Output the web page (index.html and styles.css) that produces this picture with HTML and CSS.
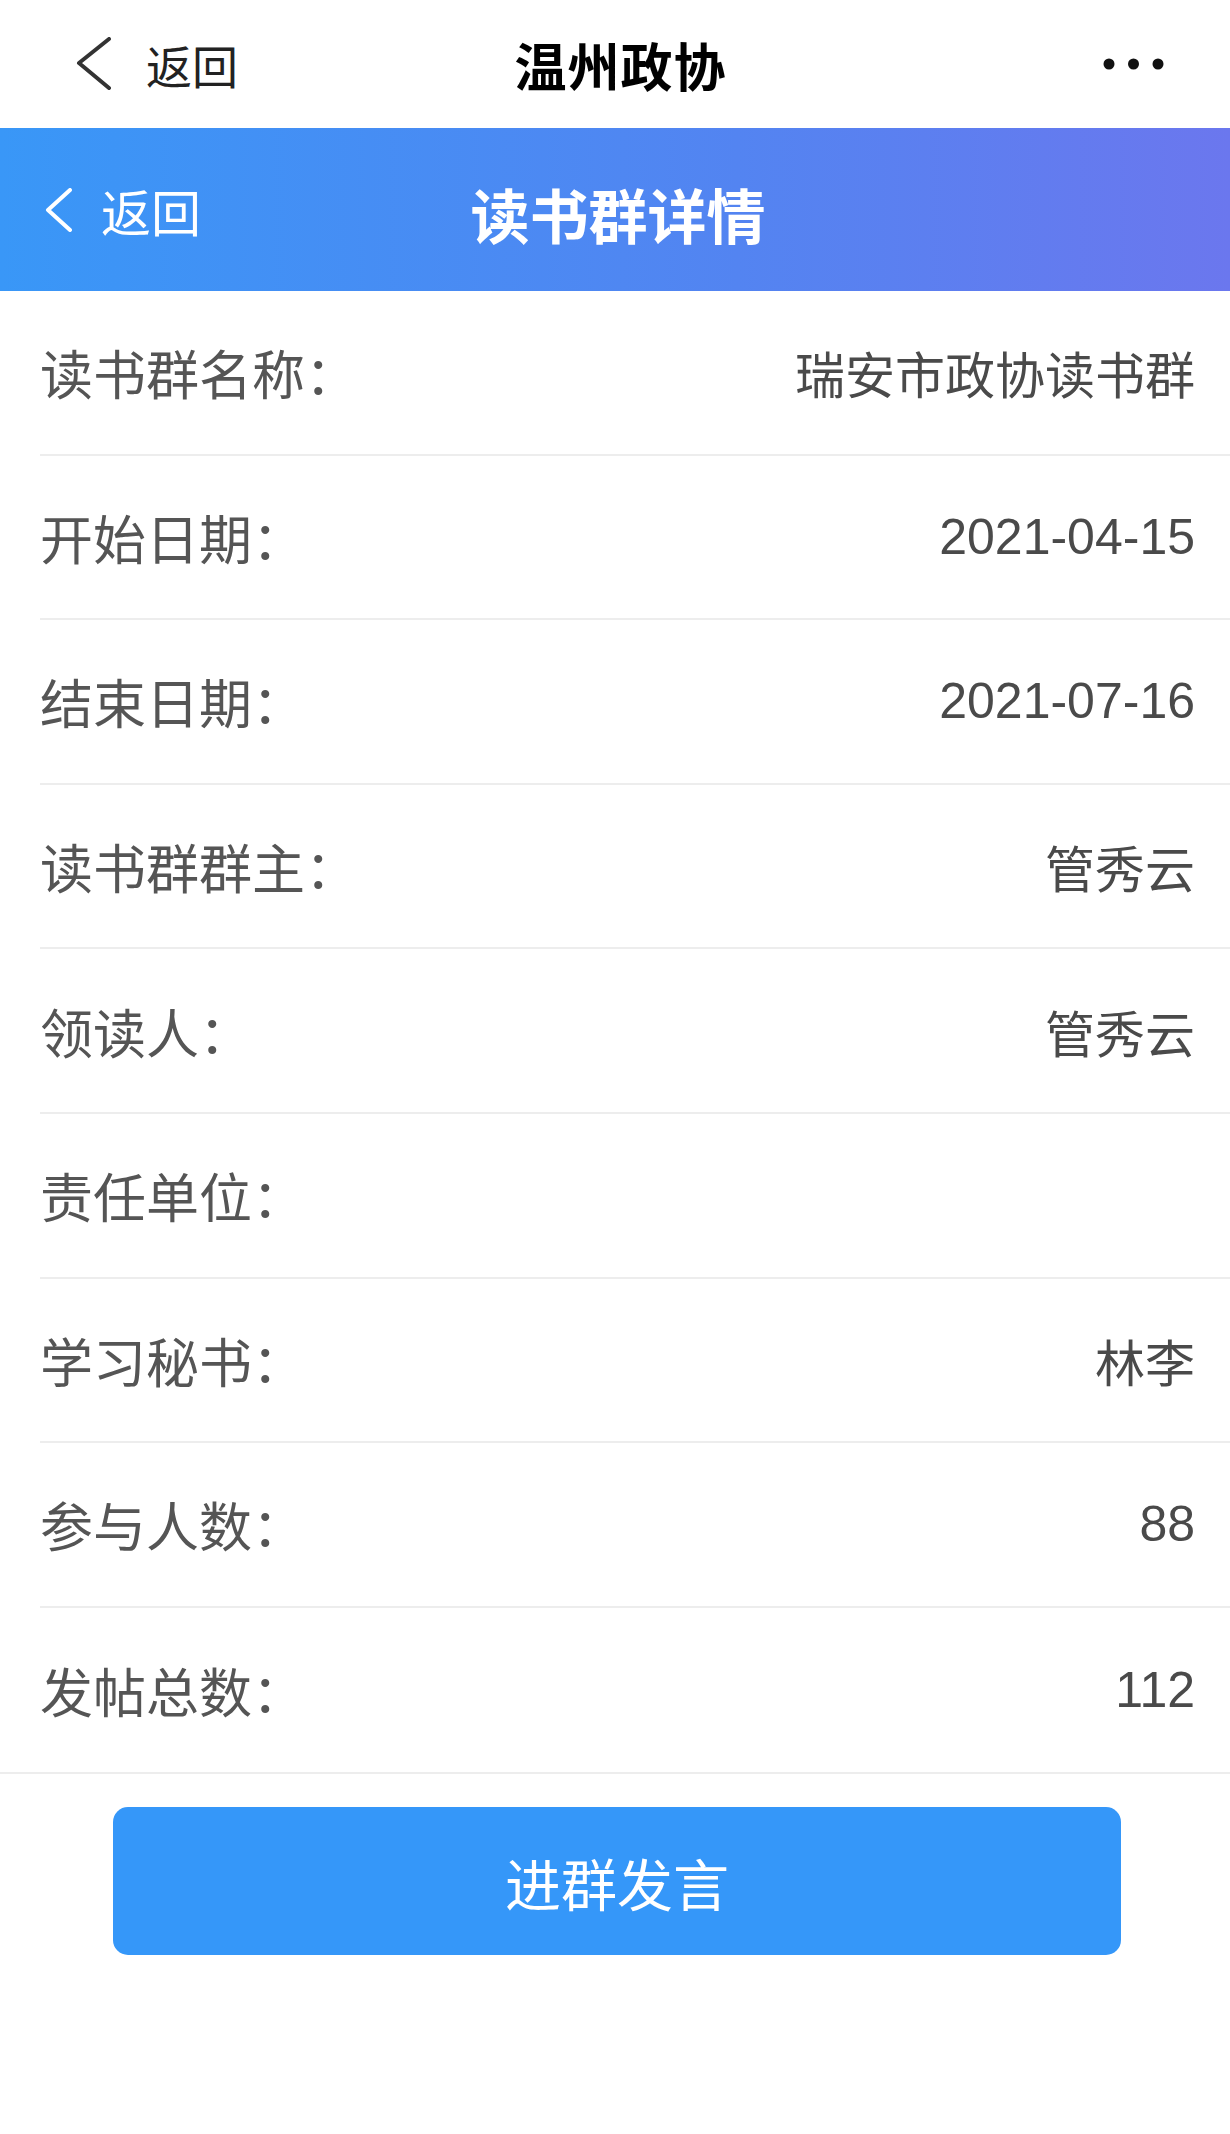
FILE: index.html
```html
<!DOCTYPE html>
<html lang="zh-CN">
  <head>
    <meta charset="UTF-8" />
    <meta name="viewport" content="width=device-width, initial-scale=1.0" />
    <title>读书群详情</title>
    <link rel="stylesheet" href="styles.css">
  </head>
  <body>
    <div class="topbar">
      <div class="back">
        <svg class="back-icon" width="36" height="54" viewBox="0 0 36 54">
          <polyline points="33,2 3,26 33,51" fill="none" stroke="#333" stroke-width="4" stroke-linecap="round" stroke-linejoin="round" />
        </svg>
        <span>返回</span>
      </div>
      <h1 class="app-title">温州政协</h1>
      <svg class="more" width="62" height="14" viewBox="0 0 62 14">
        <circle cx="6" cy="7" r="5.5" fill="#111" />
        <circle cx="30.5" cy="7" r="5.5" fill="#111" />
        <circle cx="55" cy="7" r="5.5" fill="#111" />
      </svg>
    </div>

    <div class="header">
      <div class="back back-light">
        <svg width="27" height="44" viewBox="0 0 27 44">
          <polyline points="25,2 3,22 25,42" fill="none" stroke="#fff" stroke-width="4" stroke-linecap="round" stroke-linejoin="round" />
        </svg>
        <span>返回</span>
      </div>
      <h2 class="page-title">读书群详情</h2>
      <span></span>
    </div>

    <div class="list">
      <div class="row"><span class="label">读书群名称：</span><span class="value">瑞安市政协读书群</span></div>
      <div class="row"><span class="label">开始日期：</span><span class="value">2021-04-15</span></div>
      <div class="row"><span class="label">结束日期：</span><span class="value">2021-07-16</span></div>
      <div class="row"><span class="label">读书群群主：</span><span class="value">管秀云</span></div>
      <div class="row"><span class="label">领读人：</span><span class="value">管秀云</span></div>
      <div class="row"><span class="label">责任单位：</span><span class="value"></span></div>
      <div class="row"><span class="label">学习秘书：</span><span class="value">林李</span></div>
      <div class="row"><span class="label">参与人数：</span><span class="value">88</span></div>
      <div class="row"><span class="label">发帖总数：</span><span class="value">112</span></div>
    </div>

    <div class="actions">
      <button class="join-btn">进群发言</button>
    </div>
  </body>
</html>
```

FILE: styles.css
```css
:root {
  --blue: #3597f9;
  --text: #555;
  --line: #ededed;
}

* {
  box-sizing: border-box;
  margin: 0;
  padding: 0;
  font-family: "Liberation Sans", "Noto Sans CJK SC", sans-serif;
}

body {
  background: #fff;
  min-height: 100vh;
}

.topbar {
  height: 128px;
  display: grid;
  grid-template-columns: 1fr auto 1fr;
  align-items: center;
  padding: 0 65px 0 76px;
}

.back {
  display: flex;
  align-items: center;
  gap: 34px;
  font-size: 46px;
  color: #222;
}

.app-title {
  font-size: 52px;
  font-weight: 700;
  color: #000;
  letter-spacing: 1px;
}

.more {
  justify-self: end;
}

.header {
  height: 163px;
  display: grid;
  grid-template-columns: 1fr auto 1fr;
  align-items: center;
  padding: 0 45px;
  background: linear-gradient(to right, #3997f7, #5384f1 60%, #6b77ee);
}

.back-light {
  gap: 29px;
  font-size: 50px;
  color: #fff;
}

.page-title {
  font-size: 59px;
  font-weight: 700;
  color: #fff;
  padding-top: 8px;
  margin-left: 6px;
}

.list {
  border-bottom: 2px solid var(--line);
}

.row {
  height: 164.6px;
  margin-left: 40px;
  padding-right: 35px;
  display: flex;
  justify-content: space-between;
  align-items: center;
  border-bottom: 2px solid var(--line);
}

.row:last-child {
  border-bottom: none;
}

.label {
  font-size: 53px;
  color: var(--text);
}

.value {
  font-size: 50px;
  color: #4a4a4a;
}

.actions {
  padding: 33px 109px 0 113px;
}

.join-btn {
  width: 100%;
  height: 148px;
  border: none;
  border-radius: 15px;
  background: var(--blue);
  color: #fff;
  font-size: 56px;
  cursor: pointer;
}
```
